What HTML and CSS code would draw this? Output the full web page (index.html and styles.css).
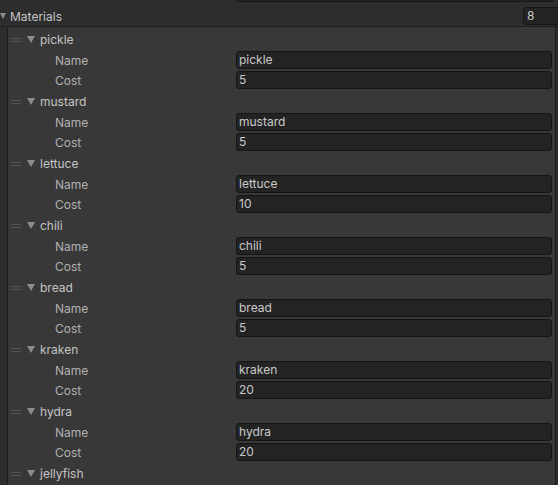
FILE: index.html
```html
<!DOCTYPE html>
<html>
<head>
<meta charset="utf-8">
<link rel="stylesheet" href="styles.css">
</head>
<body>
<div class="inspector">
  <div class="script-row">
    <span class="script-label">Script</span>
    <div class="field script-field"><span class="script-icon"></span>ReadSpreadsheet</div>
  </div>
  <div class="list-header">
    <span class="fold top-fold"></span>
    <span class="list-title">Materials</span>
    <div class="field count-field">8</div>
  </div>
  <div class="panel">
    <div class="element">
      <div class="el-header"><span class="handle"></span><span class="fold"></span><span class="el-name">pickle</span></div>
      <div class="prop"><span class="prop-label">Name</span><div class="field">pickle</div></div>
      <div class="prop"><span class="prop-label">Cost</span><div class="field">5</div></div>
    </div>
    <div class="element">
      <div class="el-header"><span class="handle"></span><span class="fold"></span><span class="el-name">mustard</span></div>
      <div class="prop"><span class="prop-label">Name</span><div class="field">mustard</div></div>
      <div class="prop"><span class="prop-label">Cost</span><div class="field">5</div></div>
    </div>
    <div class="element">
      <div class="el-header"><span class="handle"></span><span class="fold"></span><span class="el-name">lettuce</span></div>
      <div class="prop"><span class="prop-label">Name</span><div class="field">lettuce</div></div>
      <div class="prop"><span class="prop-label">Cost</span><div class="field">10</div></div>
    </div>
    <div class="element">
      <div class="el-header"><span class="handle"></span><span class="fold"></span><span class="el-name">chili</span></div>
      <div class="prop"><span class="prop-label">Name</span><div class="field">chili</div></div>
      <div class="prop"><span class="prop-label">Cost</span><div class="field">5</div></div>
    </div>
    <div class="element">
      <div class="el-header"><span class="handle"></span><span class="fold"></span><span class="el-name">bread</span></div>
      <div class="prop"><span class="prop-label">Name</span><div class="field">bread</div></div>
      <div class="prop"><span class="prop-label">Cost</span><div class="field">5</div></div>
    </div>
    <div class="element">
      <div class="el-header"><span class="handle"></span><span class="fold"></span><span class="el-name">kraken</span></div>
      <div class="prop"><span class="prop-label">Name</span><div class="field">kraken</div></div>
      <div class="prop"><span class="prop-label">Cost</span><div class="field">20</div></div>
    </div>
    <div class="element">
      <div class="el-header"><span class="handle"></span><span class="fold"></span><span class="el-name">hydra</span></div>
      <div class="prop"><span class="prop-label">Name</span><div class="field">hydra</div></div>
      <div class="prop"><span class="prop-label">Cost</span><div class="field">20</div></div>
    </div>
    <div class="element">
      <div class="el-header"><span class="handle"></span><span class="fold"></span><span class="el-name">jellyfish</span></div>
    </div>
  </div>
</div>
</body>
</html>
```
FILE: styles.css
```css
html, body {
  margin: 0;
  padding: 0;
  background: #2d2d2d;
  overflow: hidden;
  height: 485px;
}
body {
  font-family: Inter, "Noto Sans", sans-serif;
  font-size: 12px;
  color: #c4c4c4;
}
.inspector {
  width: 558px;
}
.script-row {
  height: 20px;
  margin-top: -17px;
  display: flex;
  align-items: center;
}
.script-label {
  margin-left: 11px;
  width: 225px;
  color: #7a7a7a;
}
.script-field {
  color: #7a7a7a;
  display: flex;
  align-items: center;
  gap: 6px;
}
.script-icon {
  width: 10px;
  height: 10px;
  margin-left: 2px;
  background: #6a6a6a;
  border-radius: 1px;
}
.list-header {
  height: 18px;
  padding-top: 4px;
  padding-bottom: 1px;
  display: flex;
  align-items: center;
  border-bottom: 1px solid #1e1e1e;
}
.list-header .top-fold {
  margin-left: 0;
  border-left-width: 3.5px;
  border-right-width: 3.5px;
  border-top-width: 6px;
}
.list-title {
  margin-left: 4px;
  flex: 1;
}
.count-field.field {
  flex: none;
  width: 40px;
  margin-right: -5px;
  padding-left: 3px;
}
.panel {
  margin-left: 7px;
  width: 547px;
  border-left: 1px solid #1c1c1c;
  border-right: 1px solid #1c1c1c;
  background: #383838;
  padding-top: 2px;
  height: 470px;
}
.element {
  display: flex;
  flex-direction: column;
  padding-bottom: 1px;
}
.el-header {
  height: 21px;
  display: flex;
  align-items: center;
}
.handle {
  margin-left: 3px;
  width: 10px;
  height: 4px;
  border-top: 1px solid #555555;
  border-bottom: 1px solid #555555;
  box-sizing: border-box;
}
.fold {
  width: 0;
  height: 0;
  border-left: 4px solid transparent;
  border-right: 4px solid transparent;
  border-top: 7px solid #8c8c8c;
  margin-left: 6px;
}
.el-name {
  margin-left: 5px;
}
.prop {
  height: 20px;
  display: flex;
  align-items: center;
}
.prop-label {
  margin-left: 47px;
  width: 181px;
  color: #b0b0b0;
}
.field {
  flex: 1;
  height: 18px;
  box-sizing: border-box;
  background: #232323;
  border: 1px solid #151515;
  border-radius: 3px;
  margin-right: 3px;
  padding-left: 2px;
  line-height: 16px;
  color: #cacaca;
  white-space: nowrap;
  overflow: hidden;
}
```
